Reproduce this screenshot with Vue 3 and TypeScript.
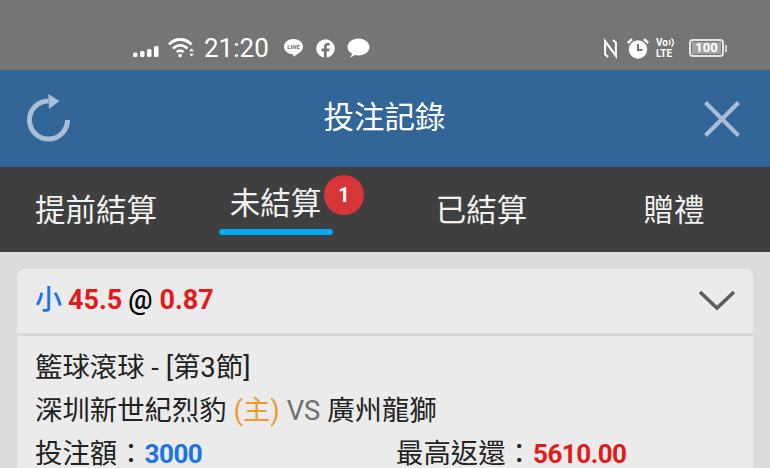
<script setup lang="ts">
const tabs = [
  { label: '提前結算', cls: 'w1' },
  { label: '未結算', cls: 'w2 active', badge: 1 },
  { label: '已結算', cls: 'w3' },
  { label: '贈禮', cls: 'w4' },
]
</script>

<template>
  <div class="page">
    <div class="status">
      <div class="status-left">
        <svg class="signal" width="26" height="12" viewBox="0 0 26 12">
          <rect x="0" y="7.5" width="4.5" height="4.5" rx="1.5" />
          <rect x="7" y="6" width="4.5" height="6" rx="1.5" />
          <rect x="14" y="4" width="4.5" height="8" rx="1.5" />
          <rect x="21" y="1" width="4.5" height="11" rx="1.5" />
        </svg>
        <svg class="wifi" width="27" height="21" viewBox="0 0 27 21" fill="none" stroke="#fff" stroke-width="2.8">
          <path d="M1 7.500C7.500 0.800 17 0.800 23.500 7.500" />
          <path d="M5 11.500C9.500 7.200 15 7.200 19.500 11.500" />
          <path d="M8.800 15C11 13.200 13.500 13.200 15.700 15" />
          <circle cx="12.200" cy="18.600" r="1.800" fill="#fff" stroke="none" />
          <path d="M23.500 11.500l2.400 2.800h-4.800zM23.500 19.500l2.400-2.800h-4.800z" fill="#fff" stroke="none" />
        </svg>
        <span class="time">21:20</span>
        <svg class="app-line" width="21" height="20" viewBox="0 0 21 20">
          <path d="M10.5 1C15.8 1 20 4.4 20 8.7c0 2.5-1.7 4.6-4 6.4-1.900 1.500-4.300 3-5.200 3.400-.7.3-.6-.4-.5-1 .1-.5.100-1.100-.8-1.200C4.700 15.700 1 12.600 1 8.700 1 4.400 5.200 1 10.500 1z" fill="#fff" />
          <text x="10.500" y="10.800" text-anchor="middle" class="line-txt">LINE</text>
        </svg>
        <svg class="app-fb" width="19" height="19" viewBox="0 0 18 18">
          <circle cx="9" cy="9" r="8.800" fill="#fff" />
          <path d="M10.100 18v-6.500h2.300l.4-2.600h-2.700V7.400c0-.8.300-1.300 1.400-1.300h1.400V3.800c-.3 0-1.100-.1-2-.1-2.100 0-3.400 1.200-3.400 3.400v1.800H5.200v2.600h2.300V18z" fill="#757575" />
        </svg>
        <svg class="app-msg" width="23" height="20" viewBox="0 0 23 20">
          <path d="M11.500 0.500C17.500 0.500 22.500 4.300 22.500 9c0 4.700-5 8.500-11 8.500-1.300 0-2.500-.2-3.700-.5-1.200 1-2.600 1.900-4.500 2.300 1-1.300 1.500-2.500 1.600-3.900C2 14.200.5 11.800.5 9 .5 4.300 5.500.5 11.500.5z" fill="#fff" />
        </svg>
      </div>
      <div class="status-right">
        <svg class="nfc" width="13" height="21" viewBox="0 0 14 21" fill="none" stroke="#fff" stroke-width="2.200">
          <path d="M4.500 19.500L1.200 17V2.500L9.500 14" />
          <path d="M9.500 1.500L12.800 4V18.500L4.500 7" />
        </svg>
        <svg class="alarm" width="22" height="21" viewBox="0 0 22 21">
          <circle cx="11" cy="11.500" r="9.200" fill="#fff" />
          <path d="M11 6V12H15.500" fill="none" stroke="#757575" stroke-width="2" />
          <path d="M0.800 5L5 1.200M21.200 5L17 1.200" stroke="#fff" stroke-width="2.400" fill="none" />
        </svg>
        <div class="volte">
          <div class="vo">Vo<svg width="7" height="11" viewBox="0 0 7 11" fill="none" stroke="#fff" stroke-width="1.300"><path d="M1 3c1.500 1.500 1.500 3.500 0 5M3.500 1.500c2.500 2.500 2.500 5.500 0 8" /></svg></div>
          <div class="lte">LTE</div>
        </div>
        <div class="battery">
          <div class="battery-box"><span>100</span></div>
          <div class="battery-tip"></div>
        </div>
      </div>
    </div>

    <header class="topbar">
      <svg class="refresh" width="44" height="48" viewBox="0 0 44 48" fill="none">
        <path d="M21.500 7A19 19 0 1 0 40.500 26" stroke="#a9bfd8" stroke-width="5" />
        <path d="M21.300 0L32.300 7L22 15.300z" fill="#a9bfd8" />
      </svg>
      <h1 class="title">投注記錄</h1>
      <svg class="close" width="36" height="36" viewBox="0 0 36 36" fill="none" stroke="#a9bfd8" stroke-width="4">
        <path d="M1.500 1.500L34.500 34.500M34.500 1.500L1.500 34.500" />
      </svg>
    </header>

    <nav class="tabs">
      <div v-for="t in tabs" :key="t.label" class="tab" :class="t.cls">
        <span class="tab-label">{{ t.label }}</span>
        <span v-if="t.badge" class="badge">{{ t.badge }}</span>
      </div>
    </nav>

    <main class="content">
      <section class="card">
        <div class="card-head">
          <div class="pick">
            <span class="blue cjk">小</span>
            <span class="red">45.5</span>
            <span class="at">@</span>
            <span class="red odds">0.87</span>
          </div>
          <svg class="chevron" width="38" height="22" viewBox="0 0 38 22" fill="none" stroke="#5d5d5d" stroke-width="3.500">
            <path d="M2 3L19 19L36 3" />
          </svg>
        </div>
        <div class="card-body">
          <div class="line">籃球滾球 - [第3節]</div>
          <div class="line">深圳新世紀烈豹 <span class="home">(主)</span> <span class="vs">VS</span> 廣州龍獅</div>
          <div class="line amounts">
            <div>投注額：<b class="blue">3000</b></div>
            <div>最高返還：<b class="red">5610.00</b></div>
          </div>
        </div>
      </section>
    </main>
  </div>
</template>

<style scoped>
.page {
  width: 770px;
  height: 468px;
  overflow: hidden;
  background: #dcdcdc;
  font-family: Roboto, "Noto Sans CJK TC", sans-serif;
}

.status {
  height: 70px;
  box-sizing: border-box;
  background: #757575;
  display: flex;
  justify-content: space-between;
  align-items: center;
  padding: 26px 43px 0 133px;
}

.status-left,
.status-right {
  display: flex;
  align-items: center;
}

.signal {
  fill: #fff;
  margin-top: 6px;
}

.wifi {
  margin-left: 9px;
  margin-top: -2px;
}

.time {
  margin-left: 9px;
  color: #fff;
  font-size: 26px;
  line-height: 30px;
  width: 66px;
}

.app-line {
  margin-left: 13px;
}

.line-txt {
  font: 700 6px Roboto, sans-serif;
  fill: #757575;
}

.app-fb {
  margin-left: 12px;
}

.app-msg {
  margin-left: 12px;
}

.nfc {
  margin-right: 10px;
}

.alarm {
  margin-right: 7px;
}

.volte {
  width: 20px;
  color: #fff;
  font-weight: 700;
  font-size: 10px;
  line-height: 11px;
  margin-right: 13px;
}

.vo {
  display: flex;
  align-items: center;
  height: 11px;
}

.battery {
  display: flex;
  align-items: center;
}

.battery-box {
  width: 35px;
  height: 18px;
  box-sizing: border-box;
  border: 2px solid #e4e4e4;
  border-radius: 4px;
  padding: 1px;
  display: flex;
}

.battery-box span {
  flex: 1;
  background: #a3a3a3;
  color: #fff;
  font-weight: 700;
  font-size: 13px;
  line-height: 12px;
  text-align: center;
}

.battery-tip {
  width: 2px;
  height: 7px;
  margin-left: 1px;
  background: #cfcfcf;
}

.topbar {
  height: 97px;
  background: #326699;
  display: flex;
  align-items: center;
  padding: 0 30px 0 27px;
}

.refresh {
  margin-top: -1px;
}

.title {
  flex: 1;
  margin: 0 6px 2px 0;
  color: #fff;
  font-size: 30.500px;
  font-weight: 400;
  line-height: 40px;
  text-align: center;
}

.close {
  margin-top: 1px;
}

.tabs {
  height: 85px;
  background: #3f3f3f;
  display: flex;
}

.tab {
  position: relative;
  display: flex;
  justify-content: center;
  box-sizing: border-box;
  padding-top: 24px;
  color: #f2f2f2;
  font-size: 30.500px;
  line-height: 40px;
}

.w1 {
  width: 192px;
}

.w2 {
  width: 193px;
  padding-right: 26px;
}

.w3 {
  width: 193px;
}

.w4 {
  width: 192px;
}

.tab.active .tab-label {
  position: relative;
  top: -7px;
}

.tab.active::after {
  content: '';
  position: absolute;
  left: 27px;
  width: 114px;
  top: 62px;
  height: 6px;
  border-radius: 3px;
  background: #03a9f4;
}

.badge {
  position: absolute;
  left: 132px;
  top: 8px;
  width: 40px;
  height: 40px;
  border-radius: 50%;
  background: #d63638;
  color: #fff;
  font-size: 20px;
  font-weight: 700;
  line-height: 40px;
  text-align: center;
}

.content {
  padding: 17px 17px 0;
}

.card {
  background: #ebebeb;
  border-radius: 8px 8px 0 0;
  height: 300px;
}

.card-head {
  height: 67px;
  box-sizing: border-box;
  border-bottom: 3px solid #d8d8d8;
  display: flex;
  align-items: center;
  justify-content: space-between;
  padding: 0 17px 3px 18px;
}

.pick {
  font-size: 27px;
  font-weight: 700;
  line-height: 36px;
  display: flex;
  gap: 6px;
}

.cjk {
  font-weight: 500;
}

.odds {
  margin-left: 1px;
}

.at {
  color: #000;
  font-weight: 500;
}

.blue {
  color: #1a73e8;
}

.red {
  color: #e31a1a;
}

.card-body {
  padding: 11px 18px 0;
  color: #222;
  font-size: 27.400px;
  line-height: 43px;
}

.home {
  color: #f09a2e;
}

.vs {
  color: #6f6f6f;
}

.amounts {
  display: flex;
}

.amounts > div:first-child {
  width: 361px;
}

.amounts b {
  font-weight: 700;
  font-size: 26px;
  letter-spacing: -0.5px;
}
</style>
